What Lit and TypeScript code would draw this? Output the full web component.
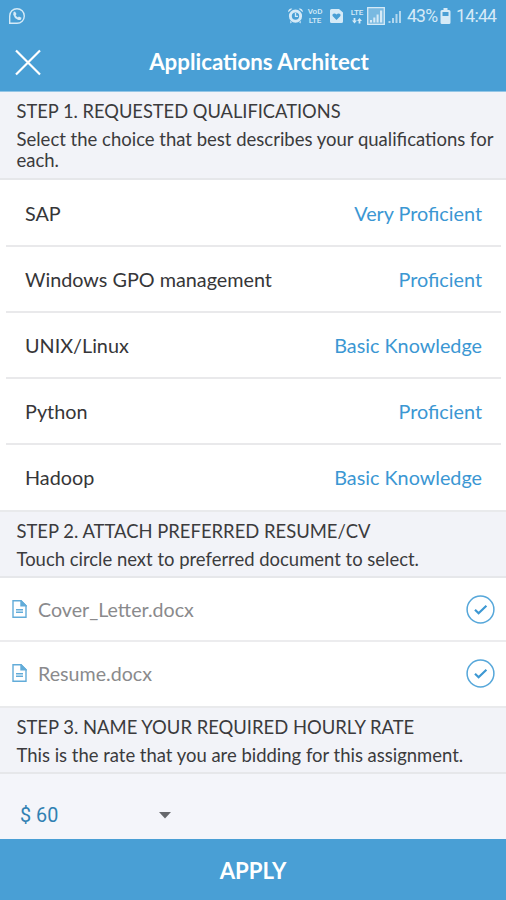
import { LitElement, html, css, svg } from "lit";
import { customElement } from "lit/decorators.js";

const skills = [
  ["SAP", "Very Proficient"],
  ["Windows GPO management", "Proficient"],
  ["UNIX/Linux", "Basic Knowledge"],
  ["Python", "Proficient"],
  ["Hadoop", "Basic Knowledge"],
];
const files = ["Cover_Letter.docx", "Resume.docx"];

const bars = (x: number) => svg`
  <path d="M${x} 15v-2h2v2zM${x + 3.5} 15v-5h2v5zM${x + 7} 15V6h2v9zM${x + 10.5} 15V3h2v12z"/>`;

@customElement("app-root")
export class AppRoot extends LitElement {
  static styles = css`
    :host {
      display: flex;
      flex-direction: column;
      width: 506px;
      height: 900px;
      overflow: hidden;
      background: #fff;
      color: #3b3b3d;
      font-family: Lato, Carlito, sans-serif;
      font-size: 19px;
    }
    * { box-sizing: border-box; }
    svg { display: block; flex: none; }
    .status {
      height: 32px;
      flex: none;
      display: flex;
      align-items: center;
      padding: 0 10px 0 8px;
      background: #499fd5;
      color: #d5eaf7;
      fill: currentColor;
      font-family: Roboto, sans-serif;
      font-size: 17.6px;
    }
    .spacer { flex: 1; }
    .net { display: flex; flex-direction: column; align-items: center; font-size: 8px; line-height: 9px; font-weight: 500; }
    .volte { width: 16px; margin-left: 4px; }
    .card { margin-left: 7px; }
    .lte { width: 16px; margin-left: 6px; }
    .sig { margin-left: 2px; }
    .pct { margin-left: 5px; width: 29px; white-space: nowrap; letter-spacing: -0.8px; }
    .bat { margin-left: 4px; }
    .time { margin-left: 5px; width: 40px; white-space: nowrap; letter-spacing: -0.7px; }
    .bar {
      height: 60px;
      flex: none;
      display: grid;
      grid-template-columns: 60px 1fr 48px;
      align-items: center;
      background: #499fd5;
      border-bottom: 1px solid #94c6e6;
      color: #fff;
      text-align: center;
      font-size: 22.3px;
      font-weight: 700;
    }
    .title { padding-bottom: 1px; }
    .close { margin-left: 14px; }
    .step {
      flex: none;
      padding: 7px 8px 0 16.5px;
      height: 68px;
      background: #f2f3f8;
      border-bottom: 2px solid #e6e7ea;
    }
    .step.tall { height: 88px; }
    .edge { border-top: 2px solid #e9eaec; padding-top: 7px; }
    .head { font-size: 18.3px; line-height: 24px; white-space: nowrap; }
    .sub { font-size: 18.5px; line-height: 21px; margin-top: 6px; }
    .edge .head { font-size: 18.43px; }
    .edge .sub { font-size: 18.47px; }
    .skills { padding: 1px 5px 0 6px; height: 330px; flex: none; }
    .skill {
      height: 66px;
      display: flex;
      justify-content: space-between;
      align-items: center;
      padding: 0 19px;
      border-bottom: 2px solid #e9e9eb;
      font-size: 19.8px;
      line-height: 24px;
      color: #363638;
    }
    .skill:last-child { border-bottom-color: transparent; }
    .level { color: #3b97d3; }
    .file {
      height: 64px;
      flex: none;
      display: flex;
      align-items: center;
      padding: 0 11px 0 12px;
      color: #8a8a8c;
      font-size: 19.65px;
      border-bottom: 2px solid #ececee;
    }
    .file.last { border-bottom-color: transparent; }
    .name { flex: 1; margin-left: 11px; }
    .rate {
      flex: 1;
      display: flex;
      align-items: center;
      padding: 17px 0 0 20px;
      background: #f4f5fa;
      color: #3181b3;
      font-size: 19.8px;
      font-family: Roboto, sans-serif;
    }
    .amount { width: 139px; }
    .apply {
      flex: none;
      height: 61px;
      display: flex;
      align-items: center;
      justify-content: center;
      padding-top: 2px;
      background: #499fd5;
      color: #fff;
      font-size: 22.2px;
      font-weight: 700;
    }
  `;

  render() {
    return html`
      <div class="status">
        <svg width="18" height="18" viewBox="0 0 18 18">
          <path d="M1.7 16.3V9A7.3 7.3 0 1 1 9 16.3z" fill="none" stroke="currentColor" stroke-width="1.4"/>
          <path d="M5.6 5.1 7 4.5l1.5 2.6-.9 1.1q.7 1.6 2.3 2.2l1-1 2.6 1.4-.5 1.6q-1.3 1.2-3.2.3Q6 10.800 5.200 7.400z"/>
        </svg>
        <span class="spacer"></span>
        <svg width="15" height="16" viewBox="0 0 15 16">
          <path d="M.3 4.300A3 3 0 0 1 4.300.8zM14.700 4.300A3 3 0 0 0 10.700.8zM2 13l2 1-1.500 1.500zM13 13l-2 1 1.500 1.500z"/>
          <path fill-rule="evenodd" d="M7.500 1.500a6.600 6.600 0 1 0 0 13.200 6.600 6.600 0 0 0 0-13.200zm0 2.900a3.700 3.700 0 1 1 0 7.400 3.700 3.700 0 0 1 0-7.400z"/>
          <path d="M7.500 5v3.300H10" fill="none" stroke="currentColor" stroke-width="1.300"/>
        </svg>
        <span class="net volte"><span>VoD</span><span>LTE</span></span>
        <svg class="card" width="13" height="16" viewBox="0 0 13 16">
          <path fill-rule="evenodd" d="M1.500 1H9l4 3.500v9q0 1.500-1.500 1.500h-10Q0 15 0 13.500v-11Q0 1 1.500 1zM6.500 12l3.700-3.800c1.500-2-1.700-4-3.700-1.700-2-2.300-5.200-.3-3.700 1.700z"/>
        </svg>
        <span class="net lte"><span>LTE</span>
          <svg width="10" height="7" viewBox="0 0 10 7"><path d="M2.500 6.500 0 3.500h1.600V1h1.800v2.500H5zM7.500 1 5 4h1.600v2.500h1.800V4H10z"/></svg>
        </span>
        <svg class="sig" width="18" height="18" viewBox="0 0 18 18">
          <path d="M.7.700h16.600v16.600H.7z" fill="#79b9e1" stroke="currentColor" stroke-width="1.300"/>
          <path d="M3 15.500v-2.500h2v2.500zM6.300 15.500v-5h2v5zM9.600 15.500v-8h2v8zM13 15.500v-12h2.200v12z"/>
        </svg>
        <svg class="sig" width="15" height="16" viewBox="0 0 15 16" opacity=".75">${bars(1.5)}</svg>
        <span class="pct">43%</span>
        <svg class="bat" width="11" height="16" viewBox="0 0 11 16">
          <path fill-rule="evenodd" d="M3.500 0h4v2H9q1.500 0 1.500 1.500v11Q10.500 16 9 16H2Q.5 16 .5 14.500v-11Q.5 2 2 2h1.500zM2.500 4v4h6V4z"/>
        </svg>
        <span class="time">14:44</span>
      </div>
      <header class="bar">
        <svg class="close" width="28" height="28" viewBox="0 0 28 28" fill="none" stroke="#fff" stroke-width="2.200">
          <path d="M2 2.500l24 24M26 2.500l-24 24"/>
        </svg>
        <span class="title">Applications Architect</span>
      </header>
      <section class="step tall">
        <div class="head">STEP 1. REQUESTED QUALIFICATIONS</div>
        <div class="sub">Select the choice that best describes your qualifications for each.</div>
      </section>
      <div class="skills">
        ${skills.map(([name, level]) => html`
          <div class="skill"><span>${name}</span><span class="level">${level}</span></div>`)}
      </div>
      <section class="step edge">
        <div class="head">STEP 2. ATTACH PREFERRED RESUME/CV</div>
        <div class="sub">Touch circle next to preferred document to select.</div>
      </section>
      ${files.map((name, i) => html`
        <div class="file ${i === files.length - 1 ? "last" : ""}">
          <svg width="15" height="18" viewBox="0 0 15 18" fill="none" stroke="#62acd9" stroke-width="1.400">
            <path d="M1 .8h8l5 5v11.400H1z"/>
            <path d="M9 .8v5h5z" fill="#62acd9"/>
            <path d="M4 9.800h7M4 12.300h7"/>
          </svg>
          <span class="name">${name}</span>
          <svg width="29" height="29" viewBox="0 0 29 29" fill="none" stroke="#56a7da">
            <circle cx="14.500" cy="14.500" r="13.400" stroke-width="1.500"/>
            <path d="M9 14.700l3.600 3.500 7.800-7.500" stroke="#3d98d3" stroke-width="2.200"/>
          </svg>
        </div>`)}
      <section class="step edge">
        <div class="head">STEP 3. NAME YOUR REQUIRED HOURLY RATE</div>
        <div class="sub">This is the rate that you are bidding for this assignment.</div>
      </section>
      <div class="rate">
        <span class="amount">$ 60</span>
        <svg width="12" height="7" viewBox="0 0 12 7"><path d="M0 0h12L6 6.500z" fill="#66686c"/></svg>
      </div>
      <footer class="apply">APPLY</footer>
    `;
  }
}
